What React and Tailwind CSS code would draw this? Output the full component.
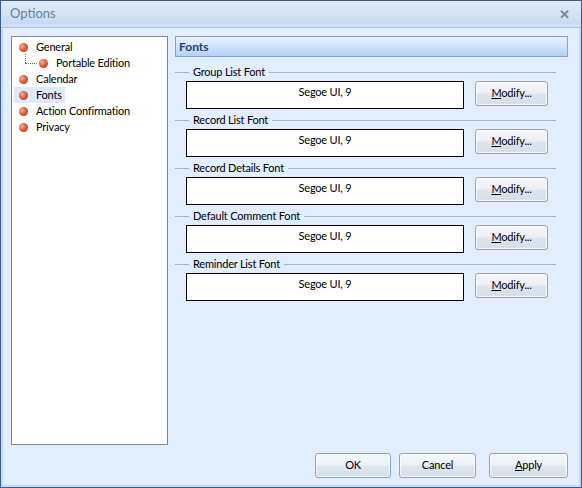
import React from "react";

const Bullet = () => (
  <span className="inline-block w-[9px] h-[9px] rounded-full bg-[radial-gradient(circle_at_35%_35%,#f7b59a_0%,#e0603a_45%,#a52a10_100%)] shrink-0" />
);

const TreeItem = ({ label, selected, indent }) => (
  <div className={`flex items-center h-[16px] ${indent ? "pl-[20px]" : "pl-0"} relative`}>
    {indent && (
      <>
        <span className="absolute left-[11px] top-[-1px] h-[9px] border-l border-dotted border-[#6a6a6a]" />
        <span className="absolute left-[11px] top-[8px] w-[12px] border-t border-dotted border-[#6a6a6a]" />
      </>
    )}
    <div className={`flex items-center h-[16px] pl-[5px] pr-[3px] ${selected ? "bg-[#dceafb]" : ""}`}>
      <Bullet />
      <span className="ml-[8px] leading-[16px]">{label}</span>
    </div>
  </div>
);

const Btn = ({ children, className = "", def }) => (
  <button
    className={`h-[25px] rounded-[3px] border ${def ? "border-[#7aa7d3]" : "border-[#9aa3b1]"} bg-[linear-gradient(to_bottom,#f6f8fb_0%,#edf1f7_48%,#dde5ef_52%,#d6dfea_100%)] text-black shadow-[inset_0_0_0_1px_rgba(255,255,255,0.7)] ${className}`}
  >
    {children}
  </button>
);

const FontGroup = ({ title }) => (
  <div className="flex flex-col">
    <div className="flex items-center h-[16px]">
      <div className="w-[14px] border-t border-[#a8b4c4]" />
      <span className="px-[4px] leading-[16px]">{title}</span>
      <div className="flex-1 border-t border-[#a8b4c4] mr-[12px]" />
    </div>
    <div className="flex mt-[1px] pl-[11px]">
      <div className="w-[278px] h-[28px] bg-white border border-black text-center leading-[15px] pt-[2px]">Segoe UI, 9</div>
      <Btn className="ml-[11px] w-[73px]">
        <span className="underline">M</span>odify...
      </Btn>
    </div>
    <div className="h-[3px]" />
  </div>
);

export default function App() {
  return (
    <div className="w-[582px] h-[488px] flex flex-col border border-[#3d5c8a] bg-[#dfebfb] text-[11px] tracking-[-0.2px] text-black font-['Lato',sans-serif] overflow-hidden">
      <div className="h-[27px] shrink-0 flex items-center justify-between bg-[linear-gradient(to_bottom,#e0ebf9_0%,#d6e4f7_40%,#c8daf3_85%,#d3e2f6_100%)] border-b border-[#a9c4e8]">
        <span className="ml-[9px] text-[13px] tracking-normal text-[#6b7f99]">Options</span>
        <span className="mr-[11px] text-[13px] font-bold text-[#7a889c] leading-none">✕</span>
      </div>
      <div className="flex-1 flex flex-col border-x-[2px] border-b-[2px] border-[#c5d9f3] bg-[#e2edfd]">
        <div className="flex flex-1 pt-[8px] pl-[8px]">
          <div className="w-[157px] h-[409px] bg-white border border-[#828790] pt-[2px] pl-[2px]">
            <TreeItem label="General" />
            <TreeItem label="Portable Edition" indent />
            <TreeItem label="Calendar" />
            <TreeItem label="Fonts" selected />
            <TreeItem label="Action Confirmation" />
            <TreeItem label="Privacy" />
          </div>
          <div className="ml-[7px] w-[393px] flex flex-col">
            <div className="h-[21px] border border-[#7fa4d6] bg-[linear-gradient(to_bottom,#e9f1ff_0%,#d3e4fb_45%,#b3d2f8_100%)] flex items-center pl-[3px]">
              <span className="font-bold text-[12px] tracking-normal text-[#1d3f7a]">Fonts</span>
            </div>
            <div className="h-[7px]" />
            <FontGroup title="Group List Font" />
            <FontGroup title="Record List Font" />
            <FontGroup title="Record Details Font" />
            <FontGroup title="Default Comment Font" />
            <FontGroup title="Reminder List Font" />
          </div>
        </div>
        <div className="flex justify-end pr-[11px] pb-[7px]">
          <Btn def className="w-[76px]">OK</Btn>
          <Btn className="w-[77px] ml-[8px]">Cancel</Btn>
          <Btn className="w-[79px] ml-[13px]">
            <span className="underline">A</span>pply
          </Btn>
        </div>
      </div>
    </div>
  );
}
